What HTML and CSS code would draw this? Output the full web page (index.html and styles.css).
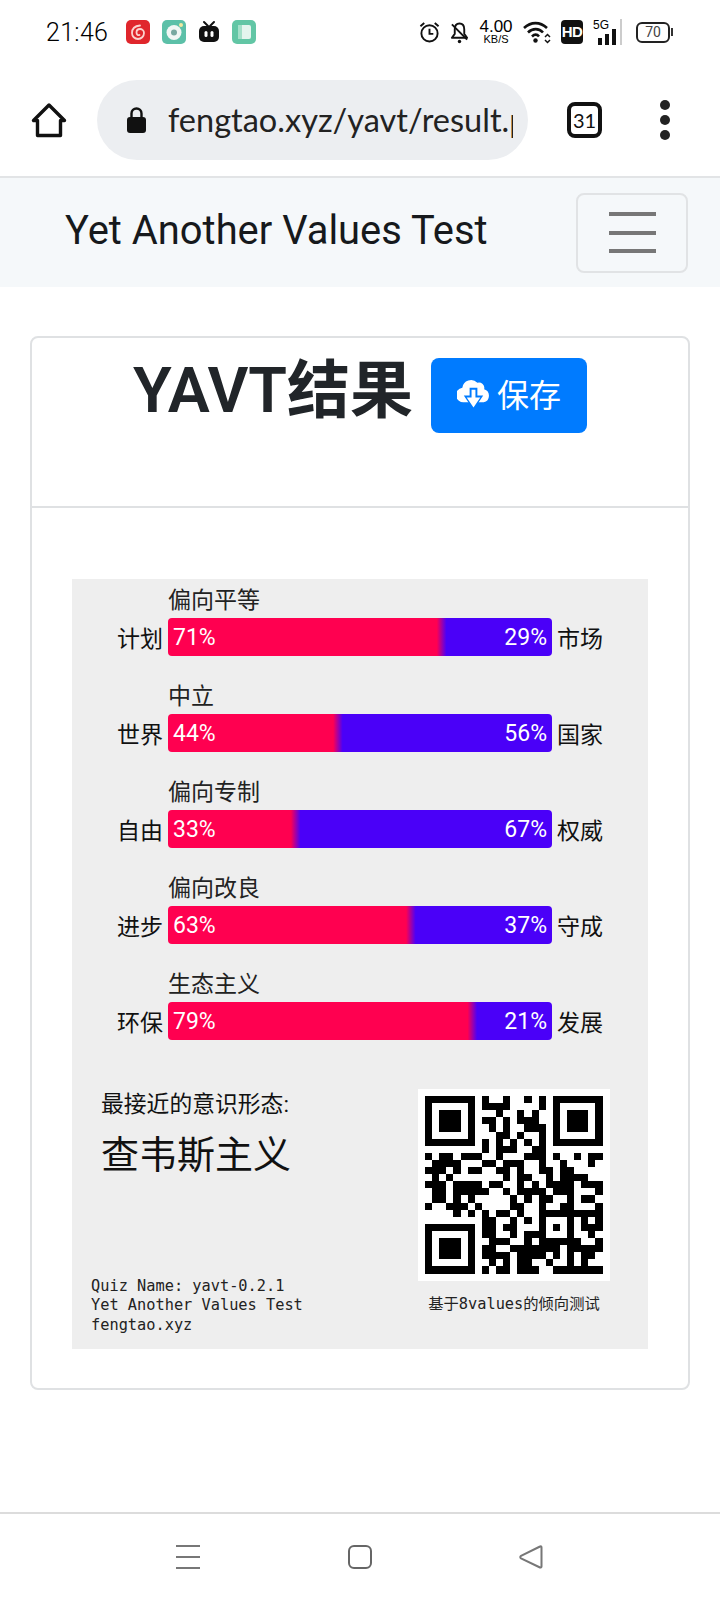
FILE: index.html
```html
<!DOCTYPE html>
<html lang="zh">
<head>
<meta charset="utf-8">
<title>YAVT结果</title>
<link rel="stylesheet" href="styles.css">
</head>
<body>
<div class="screen">
  <header class="status">
    <div class="status-left">
      <span class="time">21:46</span>
      <div class="app-icons">
        <svg class="app" viewBox="0 0 24 24"><rect width="24" height="24" rx="5" fill="#e0262c"/><path d="M14 5.500c-5 .5-8 3.500-8 7.500a6 6 0 0 0 12 0c0-2.500-2-4-4-4s-3.500 1.500-3.500 3.500 1.500 3 3 2.500" fill="none" stroke="#fbd3cf" stroke-width="1.800" stroke-linecap="round"/></svg>
        <svg class="app" viewBox="0 0 24 24"><rect width="24" height="24" rx="5" fill="#5cc0a8"/><circle cx="12" cy="12.5" r="7.5" fill="#f1f6f4"/><circle cx="12" cy="12.5" r="3" fill="#78a8a0"/><circle cx="19" cy="5" r="2" fill="#f2e9a0"/></svg>
        <svg class="app app-tv" viewBox="0 0 22 24"><path d="M6 2l4 4M16 2l-4 4" stroke="#111" stroke-width="2" stroke-linecap="round"/><rect x="1" y="6" width="20" height="16" rx="5" fill="#111"/><rect x="6.5" y="11" width="3" height="6" rx="1.5" fill="#fff"/><rect x="12.5" y="11" width="3" height="6" rx="1.5" fill="#fff"/></svg>
        <svg class="app" viewBox="0 0 24 24"><rect width="24" height="24" rx="5" fill="#62c6a5"/><rect x="6" y="5" width="13" height="14" rx="2" fill="#e4f5ee"/><rect x="6" y="5" width="4" height="14" fill="#a4e0c9"/></svg>
      </div>
    </div>
    <div class="status-right">
      <svg class="i-alarm" viewBox="0 0 22 24"><circle cx="11" cy="13.500" r="8.500" fill="none" stroke="#111" stroke-width="2"/><path d="M11 8.500v5.500h4M1.500 6l4-3.500M20.500 6l-4-3.500" fill="none" stroke="#111" stroke-width="2"/></svg>
      <svg class="i-bell" viewBox="0 0 20 24"><path d="M10 3c-3.500 0-5 3-5 6v5l-3 4h16l-3-4V9c0-3-1.500-6-5-6z" fill="none" stroke="#111" stroke-width="2" stroke-linejoin="round"/><path d="M2 4l16 16" stroke="#111" stroke-width="2"/><circle cx="10" cy="22" r="1.800" fill="#111"/></svg>
      <div class="speed"><span class="speed-num">4.00</span><span class="speed-unit">KB/S</span></div>
      <svg class="i-wifi" viewBox="0 0 28 24"><path d="M1 8c7-6.500 16-6.500 23 0M5 12.500c4.500-4.500 11-4.500 15 0M9 16.500c2.500-2.500 5-2.500 7 0" fill="none" stroke="#111" stroke-width="2.600"/><circle cx="12.500" cy="20.500" r="2.200" fill="#111"/><path d="M22 17l2.500-2.500 2.500 2.500M22 20l2.500 2.500 2.500-2.500" fill="none" stroke="#111" stroke-width="1.500"/></svg>
      <div class="hd">HD</div>
      <div class="signal"><span class="signal-5g">5G</span><span class="signal-bars"><i class="b1"></i><i class="b2"></i><i class="b3"></i><i class="b4"></i></span></div>
      <div class="battery"><span class="battery-body">70</span><span class="battery-tip"></span></div>
    </div>
  </header>

  <div class="toolbar">
    <svg class="i-home" viewBox="0 0 36 36"><path d="M18 3L2.500 18.500H6.500V33.500H29.500V18.500H33.500z" fill="none" stroke="#111" stroke-width="3.400" stroke-linejoin="round"/></svg>
    <div class="urlbar">
      <svg class="i-lock" viewBox="0 0 19 26"><path d="M4.500 11V6.500a5 5 0 0 1 10 0V11" fill="none" stroke="#111" stroke-width="2.400"/><rect x="0" y="10" width="19" height="16" rx="3" fill="#111"/></svg>
      <span class="url">fengtao.xyz/yavt/result.php</span>
    </div>
    <div class="tabs">31</div>
    <div class="dots"><i></i><i></i><i></i></div>
  </div>

  <nav class="navbar">
    <span class="brand">Yet Another Values Test</span>
    <div class="toggler"><i></i><i></i><i></i></div>
  </nav>

  <main class="main">
    <section class="card">
      <div class="card-header">
        <h1 class="title">YAVT结果</h1>
        <div class="save">
          <svg class="i-cloud" viewBox="0 0 34 38"><path d="M28 13.500A5.500 5.500 0 0 0 21 7 9 9 0 0 0 5.500 12 7.500 7.500 0 0 0 7.500 27h20a7 7 0 0 0 .5-13.500z" fill="#fff"/><path d="M13 12h8v8h6l-10 15L7 20h6z" fill="#007bff"/><path d="M15 14h4v8h5l-7 10.500L10 22h5z" fill="#fff"/></svg>
          <span class="save-text">保存</span>
        </div>
      </div>
      <div class="card-body">
        <div class="panel">
          <div class="axis">
            <div class="axis-label">偏向平等</div>
            <div class="axis-row"><span class="side side-l">计划</span><div class="bar" style="--p:71%"><span>71%</span><span>29%</span></div><span class="side">市场</span></div>
          </div>
          <div class="axis">
            <div class="axis-label">中立</div>
            <div class="axis-row"><span class="side side-l">世界</span><div class="bar" style="--p:44%"><span>44%</span><span>56%</span></div><span class="side">国家</span></div>
          </div>
          <div class="axis">
            <div class="axis-label">偏向专制</div>
            <div class="axis-row"><span class="side side-l">自由</span><div class="bar" style="--p:33%"><span>33%</span><span>67%</span></div><span class="side">权威</span></div>
          </div>
          <div class="axis">
            <div class="axis-label">偏向改良</div>
            <div class="axis-row"><span class="side side-l">进步</span><div class="bar" style="--p:63%"><span>63%</span><span>37%</span></div><span class="side">守成</span></div>
          </div>
          <div class="axis">
            <div class="axis-label">生态主义</div>
            <div class="axis-row"><span class="side side-l">环保</span><div class="bar" style="--p:79%"><span>79%</span><span>21%</span></div><span class="side">发展</span></div>
          </div>
          <div class="summary">
            <div class="summary-left">
              <div class="ideology">
                <div class="ideology-label">最接近的意识形态:</div>
                <div class="ideology-name">查韦斯主义</div>
              </div>
              <div class="meta">Quiz Name: yavt-0.2.1<br>Yet Another Values Test<br>fengtao.xyz</div>
            </div>
            <div class="summary-right">
              <div class="qr">
                <svg viewBox="0 0 25 25" class="qr-svg"><path fill="none" stroke="#000" stroke-width="1" d="M0 .5h7M8 .5h1M11 .5h1M14 .5h1M16 .5h1M18 .5h7
M0 1.500h1M6 1.500h1M8 1.500h4M16 1.500h1M18 1.500h1M24 1.500h1
M0 2.500h1M2 2.500h3M6 2.500h1M10 2.500h1M13 2.500h1M15 2.500h1M18 2.500h1M20 2.500h3M24 2.500h1
M0 3.500h1M2 3.500h3M6 3.500h1M8 3.500h2M11 3.500h1M13 3.500h3M18 3.500h1M20 3.500h3M24 3.500h1
M0 4.500h1M2 4.500h3M6 4.500h1M9 4.500h1M11 4.500h1M14 4.500h3M18 4.500h1M20 4.500h3M24 4.500h1
M0 5.500h1M6 5.500h1M10 5.500h2M13 5.500h1M16 5.500h1M18 5.500h1M24 5.500h1
M0 6.500h7M8 6.500h1M10 6.500h1M12 6.500h1M14 6.500h1M16 6.500h1M18 6.500h7
M8 7.500h1M10 7.500h3M15 7.500h2
M0 8.500h1M2 8.500h2M5 8.500h3M10 8.500h1M14 8.500h3M18 8.500h1M21 8.500h1M23 8.500h2
M1 9.500h4M8 9.500h2M11 9.500h3M16 9.500h1M19 9.500h1M23 9.500h1
M0 10.500h3M4 10.500h1M6 10.500h2M10 10.500h2M13 10.500h1M16 10.500h2M19 10.500h2
M1 11.500h1M3 11.500h1M11 11.500h1M13 11.500h2M17 11.500h1M19 11.500h4
M0 12.500h3M4 12.500h4M9 12.500h2M13 12.500h1M15 12.500h1M17 12.500h4M22 12.500h3
M1 13.500h2M4 13.500h5M11 13.500h1M13 13.500h4M18 13.500h3M24 13.500h1
M1 14.500h2M4 14.500h1M6 14.500h1M12 14.500h1M14 14.500h1M16 14.500h2M20 14.500h1M22 14.500h2
M0 15.500h1M3 15.500h3M7 15.500h1M12 15.500h2M16 15.500h1M19 15.500h2M24 15.500h1
M4 16.500h1M6 16.500h1M8 16.500h1M10 16.500h2M13 16.500h1M16 16.500h9
M8 17.500h2M12 17.500h1M14 17.500h1M16 17.500h1M20 17.500h1M22 17.500h1M24 17.500h1
M0 18.500h7M8 18.500h2M11 18.500h2M16 18.500h1M18 18.500h1M20 18.500h1M22 18.500h3
M0 19.500h1M6 19.500h1M8 19.500h2M12 19.500h1M14 19.500h3M20 19.500h1M23 19.500h1
M0 20.500h1M2 20.500h3M6 20.500h1M9 20.500h3M14 20.500h1M16 20.500h6M24 20.500h1
M0 21.500h1M2 21.500h3M6 21.500h1M8 21.500h2M12 21.500h7M20 21.500h5
M0 22.500h1M2 22.500h3M6 22.500h1M8 22.500h4M13 22.500h4M18 22.500h1M20 22.500h1M22 22.500h2
M0 23.500h1M6 23.500h1M9 23.500h1M11 23.500h1M13 23.500h2M17 23.500h1M20 23.500h1M22 23.500h1
M0 24.500h7M8 24.500h1M10 24.500h2M13 24.500h3M18 24.500h7"/></svg>
              </div>
              <div class="caption">基于8values的倾向测试</div>
            </div>
          </div>
        </div>
      </div>
    </section>
  </main>

  <footer class="sysnav">
    <svg class="nav-i" viewBox="0 0 24 24"><path d="M0 1h24M0 12h24M0 23h24" stroke="#777" stroke-width="2"/></svg>
    <svg class="nav-i" viewBox="0 0 24 24"><rect x="1" y="1" width="22" height="22" rx="5" fill="none" stroke="#666" stroke-width="2"/></svg>
    <svg class="nav-i" viewBox="0 0 24 24"><path d="M22.500 2.500v19c0 1-.8 1.300-1.500 1L2 13.300c-1-.6-1-1.900 0-2.500L21 1.500c.7-.4 1.500 0 1.500 1z" fill="none" stroke="#777" stroke-width="2" stroke-linejoin="round"/></svg>
  </footer>
</div>
</body>
</html>
```

FILE: styles.css
```css
* { box-sizing: border-box; }
html, body { margin: 0; padding: 0; background: #fff; }
body { font-family: Roboto, "Noto Sans CJK SC", sans-serif; color: #212529; }
.screen { width: 720px; height: 1600px; display: flex; flex-direction: column; overflow: hidden; }

.status { height: 64px; flex: none; display: flex; justify-content: space-between; align-items: center; padding: 0 47px 0 46px; color: #000; }
.status-left { display: flex; align-items: center; gap: 19px; }
.time { font-size: 25px; width: 61px; font-weight: 300; letter-spacing: .3px; }
.app-icons { display: flex; align-items: center; gap: 12px; }
.app { width: 24px; height: 24px; display: block; }
.app-tv { width: 22px; }
.status-right { display: flex; align-items: center; gap: 10px; }
.i-alarm { width: 21px; height: 24px; }
.i-bell { width: 19px; height: 24px; }
.i-wifi { width: 28px; height: 24px; }
.speed { width: 34px; display: flex; flex-direction: column; align-items: center; line-height: 1; font-family: "Liberation Sans", sans-serif; }
.speed-num { font-size: 17px; line-height: 15px; }
.speed-unit { font-size: 11px; line-height: 11px; }
.hd { width: 22px; height: 24px; background: #111; color: #fff; border-radius: 4px; font: bold 15px/24px "Liberation Sans", sans-serif; text-align: center; letter-spacing: -.5px; }
.signal { width: 33px; height: 26px; position: relative; }
.signal-5g { position: absolute; left: 0; top: 0; font: 12px/13px "Liberation Sans", sans-serif; }
.signal-bars { position: absolute; left: 5px; bottom: 0; display: flex; align-items: flex-end; gap: 3px; }
.signal-bars i { display: block; width: 4px; background: #111; }
.b1 { height: 7px; }
.b2 { height: 11px; }
.b3 { height: 16px; }
.signal-bars .b4 { height: 26px; width: 2px; background: #ccc; margin-left: 1px; }
.battery { display: flex; align-items: center; width: 37px; }
.battery-body { width: 34px; height: 21px; border: 2px solid #222; border-radius: 6px; font: 14px/17px Roboto, sans-serif; text-align: center; color: #444; }
.battery-tip { width: 2px; height: 8px; background: #333; margin-left: 1px; }

.toolbar { height: 114px; flex: none; border-bottom: 2px solid #e2e4e6; display: flex; align-items: center; padding: 0 0 0 31px; }
.i-home { width: 36px; height: 36px; flex: none; margin-right: 30px; }
.urlbar { width: 431px; height: 80px; flex: none; border-radius: 40px; background: #eceef1; display: flex; align-items: center; padding: 0 15px 0 30px; margin-right: 39px; }
.i-lock { width: 19px; height: 26px; flex: none; margin-right: 22px; }
.url { font: 400 32.500px/50px Lato, "Noto Sans", sans-serif; color: #222; white-space: nowrap; overflow: hidden; flex: 1; }
.tabs { width: 35px; height: 36px; flex: none; border: 4px solid #111; border-radius: 8px; font: 20px/28px Lato, sans-serif; text-align: center; color: #111; margin-right: 58px; }
.dots { display: flex; flex-direction: column; gap: 5px; width: 10px; }
.dots i { display: block; width: 10px; height: 10px; border-radius: 50%; background: #222; }

.navbar { height: 109px; flex: none; background: #f5f8fa; display: flex; align-items: center; justify-content: space-between; padding: 0 32px 0 65px; }
.brand { font-size: 39.900px; line-height: 44px; margin-top: -3px; color: #16191c; white-space: nowrap; }
.toggler { width: 112px; height: 80px; border: 2px solid #e1e3e5; border-radius: 8px; display: flex; flex-direction: column; align-items: center; justify-content: center; gap: 14.500px; }
.toggler i { display: block; width: 47px; height: 4px; background: #777; }

.main { flex: 1; padding: 49px 30px 0; }
.card { height: 1054px; border: 2px solid #dfe1e3; border-radius: 8px; display: flex; flex-direction: column; }
.card-header { height: 170px; flex: none; border-bottom: 2px solid #dfe1e3; display: flex; justify-content: center; align-items: flex-start; gap: 18px; padding-top: 20px; }
.title { margin: 0; font-size: 63px; font-weight: 600; line-height: 66px; height: 66px; color: #212529; white-space: nowrap; }
.save { width: 156px; height: 75px; background: #007bff; border-radius: 8px; color: #fff; display: flex; align-items: center; justify-content: center; gap: 7px; font-size: 32px; }
.save-text { margin-bottom: 6px; }
.i-cloud { width: 33px; height: 37px; margin-top: -2px; }
.card-body { flex: 1; padding: 71px 40px 39px; }

.panel { height: 770px; background: #eee; padding-top: 2px; display: flex; flex-direction: column; gap: 21px; color: #111; }
.axis { height: 75px; flex: none; }
.axis-label { height: 37px; line-height: 37px; font-size: 23px; margin-left: 96px; padding-top: 1px; color: #222; }
.axis-row { display: grid; grid-template-columns: 96px 384px 1fr; height: 38px; align-items: center; font-size: 23px; }
.side { padding-left: 5px; }
.side-l { padding: 0 5px 0 0; text-align: right; }
.bar { height: 38px; border-radius: 4px; display: flex; justify-content: space-between; align-items: center; padding: 0 5px; color: #fff; font-size: 23px; background: linear-gradient(90deg, #ff0050 calc(var(--p) - 1%), #4a00f8 calc(var(--p) + 1.500%)); }

.summary { flex: 1; margin-top: 28px; display: flex; justify-content: space-between; padding: 0 38px 14px 19px; }
.summary-left { display: flex; flex-direction: column; justify-content: space-between; }
.ideology { padding: 1px 0 0 10px; }
.ideology-label { font-size: 22.800px; line-height: 30px; margin-top: 0; }
.ideology-name { font-size: 38px; line-height: 50px; margin-top: 10px; }
.meta { font: 15.300px/19.500px "DejaVu Sans Mono", monospace; color: #222; }
.summary-right { display: flex; flex-direction: column; align-items: center; }
.qr { width: 192px; height: 192px; background: #fff; display: flex; align-items: center; justify-content: center; }
.qr-svg { width: 177.500px; height: 177.500px; display: block; shape-rendering: crispEdges; }
.caption { font: 15.300px/20px "DejaVu Sans Mono", "Noto Sans CJK SC", monospace; margin-top: 13px; color: #222; white-space: nowrap; }

.sysnav { height: 88px; flex: none; border-top: 2px solid #dcdcdc; display: flex; justify-content: space-between; align-items: center; padding: 0 177px 0 176px; }
.nav-i { width: 24px; height: 24px; }
```
